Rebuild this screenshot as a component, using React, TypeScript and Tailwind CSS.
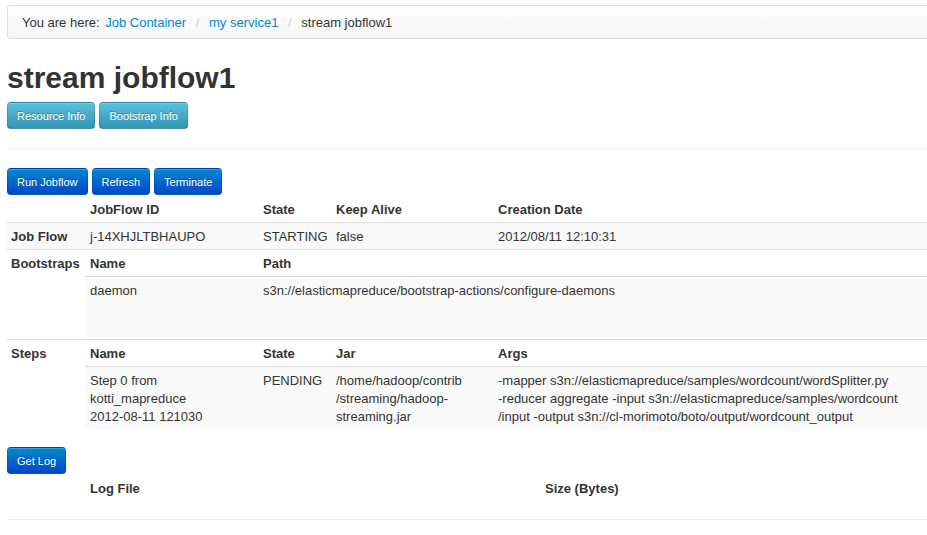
import type { ReactNode } from "react";

const btnBase =
  "inline-flex items-center h-[27px] px-[9px] rounded-[4px] border text-[11px] leading-[18px] text-white [text-shadow:0_-1px_0_rgba(0,0,0,0.25)] shadow-[inset_0_1px_0_rgba(255,255,255,0.2),0_1px_2px_rgba(0,0,0,0.05)]";

const variants = {
  info: "bg-linear-to-b from-[#5bc0de] to-[#2f96b4] border-[rgba(0,0,0,0.1)] border-b-[rgba(0,0,0,0.25)]",
  primary:
    "bg-linear-to-b from-[#0088cc] to-[#0044cc] border-[rgba(0,0,0,0.1)] border-b-[rgba(0,0,0,0.25)]",
};

function Btn({ children, variant }: { children: ReactNode; variant: "info" | "primary" }) {
  return (
    <button type="button" className={`${btnBase} ${variants[variant]}`}>
      {children}
    </button>
  );
}

function Divider() {
  return <span className="px-[6px] text-[#ccc]">/</span>;
}

export default function App() {
  return (
    <div className="w-full overflow-hidden bg-white font-['Liberation_Sans',Arial,sans-serif] text-[13px] leading-[18px] text-[#333]">
      <div className="w-[960px] pl-[7px] pt-[5px] pb-[16px]">
        {/* Breadcrumb */}
        <div className="rounded-[3px] border border-[#ddd] bg-linear-to-b from-white to-[#f5f5f5] px-[14px] pt-[8px] pb-[6px] shadow-[inset_0_1px_0_white]">
          You are here: <a className="ml-[2px] text-[#0088cc]">Job Container</a> <Divider />{" "}
          <a className="text-[#0088cc]">my service1</a> <Divider /> <span>stream jobflow1</span>
        </div>

        {/* Title */}
        <h1 className="mt-[21px] text-[30px] leading-[36px] font-bold text-[#333]">stream jobflow1</h1>
        <div className="mt-[6px] flex gap-[4px]">
          <Btn variant="info">Resource Info</Btn>
          <Btn variant="info">Bootstrap Info</Btn>
        </div>

        <div className="mt-[19px] border-t border-b border-t-[#eee] border-b-white" />

        {/* Actions */}
        <div className="mt-[18px] flex gap-[4px]">
          <Btn variant="primary">Run Jobflow</Btn>
          <Btn variant="primary">Refresh</Btn>
          <Btn variant="primary">Terminate</Btn>
        </div>

        {/* Job flow table */}
        <div className="mt-[1px]">
          <div className="grid grid-cols-[78px_174px_73px_162px_1fr] pt-[5px] pb-[3px] font-bold">
            <div />
            <div className="pl-[5px]">JobFlow ID</div>
            <div className="pl-[4px]">State</div>
            <div className="pl-[4px]">Keep Alive</div>
            <div className="pl-[4px]">Creation Date</div>
          </div>
          <div className="grid grid-cols-[78px_174px_73px_162px_1fr] border-t border-[#ddd] bg-[#f9f9f9] pt-[5px] pb-[3px]">
            <div className="pl-[4px] font-bold">Job Flow</div>
            <div className="pl-[5px]">j-14XHJLTBHAUPO</div>
            <div className="pl-[4px]">STARTING</div>
            <div className="pl-[4px]">false</div>
            <div className="pl-[4px]">2012/08/11 12:10:31</div>
          </div>

          {/* Bootstraps */}
          <div className="flex border-t border-[#ddd]">
            <div className="w-[78px] shrink-0 pt-[5px] pb-[3px] pl-[4px] font-bold">Bootstraps</div>
            <div className="flex-1">
              <div className="grid grid-cols-[174px_1fr] pt-[5px] pb-[3px] font-bold">
                <div className="pl-[5px]">Name</div>
                <div className="pl-[4px]">Path</div>
              </div>
              <div className="grid h-[63px] grid-cols-[174px_1fr] border-t border-[#ddd] bg-[#f9f9f9] pt-[5px] pb-[3px]">
                <div className="pl-[5px]">daemon</div>
                <div className="pl-[4px]">s3n://elasticmapreduce/bootstrap-actions/configure-daemons</div>
              </div>
            </div>
          </div>

          {/* Steps */}
          <div className="flex border-t border-[#ddd]">
            <div className="w-[78px] shrink-0 pt-[5px] pb-[3px] pl-[4px] font-bold">Steps</div>
            <div className="flex-1">
              <div className="grid grid-cols-[174px_73px_162px_1fr] pt-[5px] pb-[3px] font-bold">
                <div className="pl-[5px]">Name</div>
                <div className="pl-[4px]">State</div>
                <div className="pl-[4px]">Jar</div>
                <div className="pl-[4px]">Args</div>
              </div>
              <div className="grid grid-cols-[174px_73px_162px_1fr] border-t border-[#ddd] bg-[#f9f9f9] pt-[5px] pb-[3px]">
                <div className="pl-[5px]">
                  Step 0 from
                  <br />
                  kotti_mapreduce
                  <br />
                  2012-08-11 121030
                </div>
                <div className="pl-[4px]">PENDING</div>
                <div className="pl-[4px]">
                  /home/hadoop/contrib
                  <br />
                  /streaming/hadoop-
                  <br />
                  streaming.jar
                </div>
                <div className="pl-[4px] whitespace-nowrap">
                  -mapper s3n://elasticmapreduce/samples/wordcount/wordSplitter.py
                  <br />
                  -reducer aggregate -input s3n://elasticmapreduce/samples/wordcount
                  <br />
                  /input -output s3n://cl-morimoto/boto/output/wordcount_output
                </div>
              </div>
            </div>
          </div>
        </div>

        {/* Logs */}
        <div className="mt-[18px] flex">
          <Btn variant="primary">Get Log</Btn>
        </div>
        <div className="mt-[1px] grid grid-cols-[78px_456px_1fr] pt-[5px] pb-[3px] font-bold">
          <div />
          <div className="pl-[5px]">Log File</div>
          <div className="pl-[4px]">Size (Bytes)</div>
        </div>
        <div className="mt-[18px] border-t border-[#eee]" />
      </div>
    </div>
  );
}
